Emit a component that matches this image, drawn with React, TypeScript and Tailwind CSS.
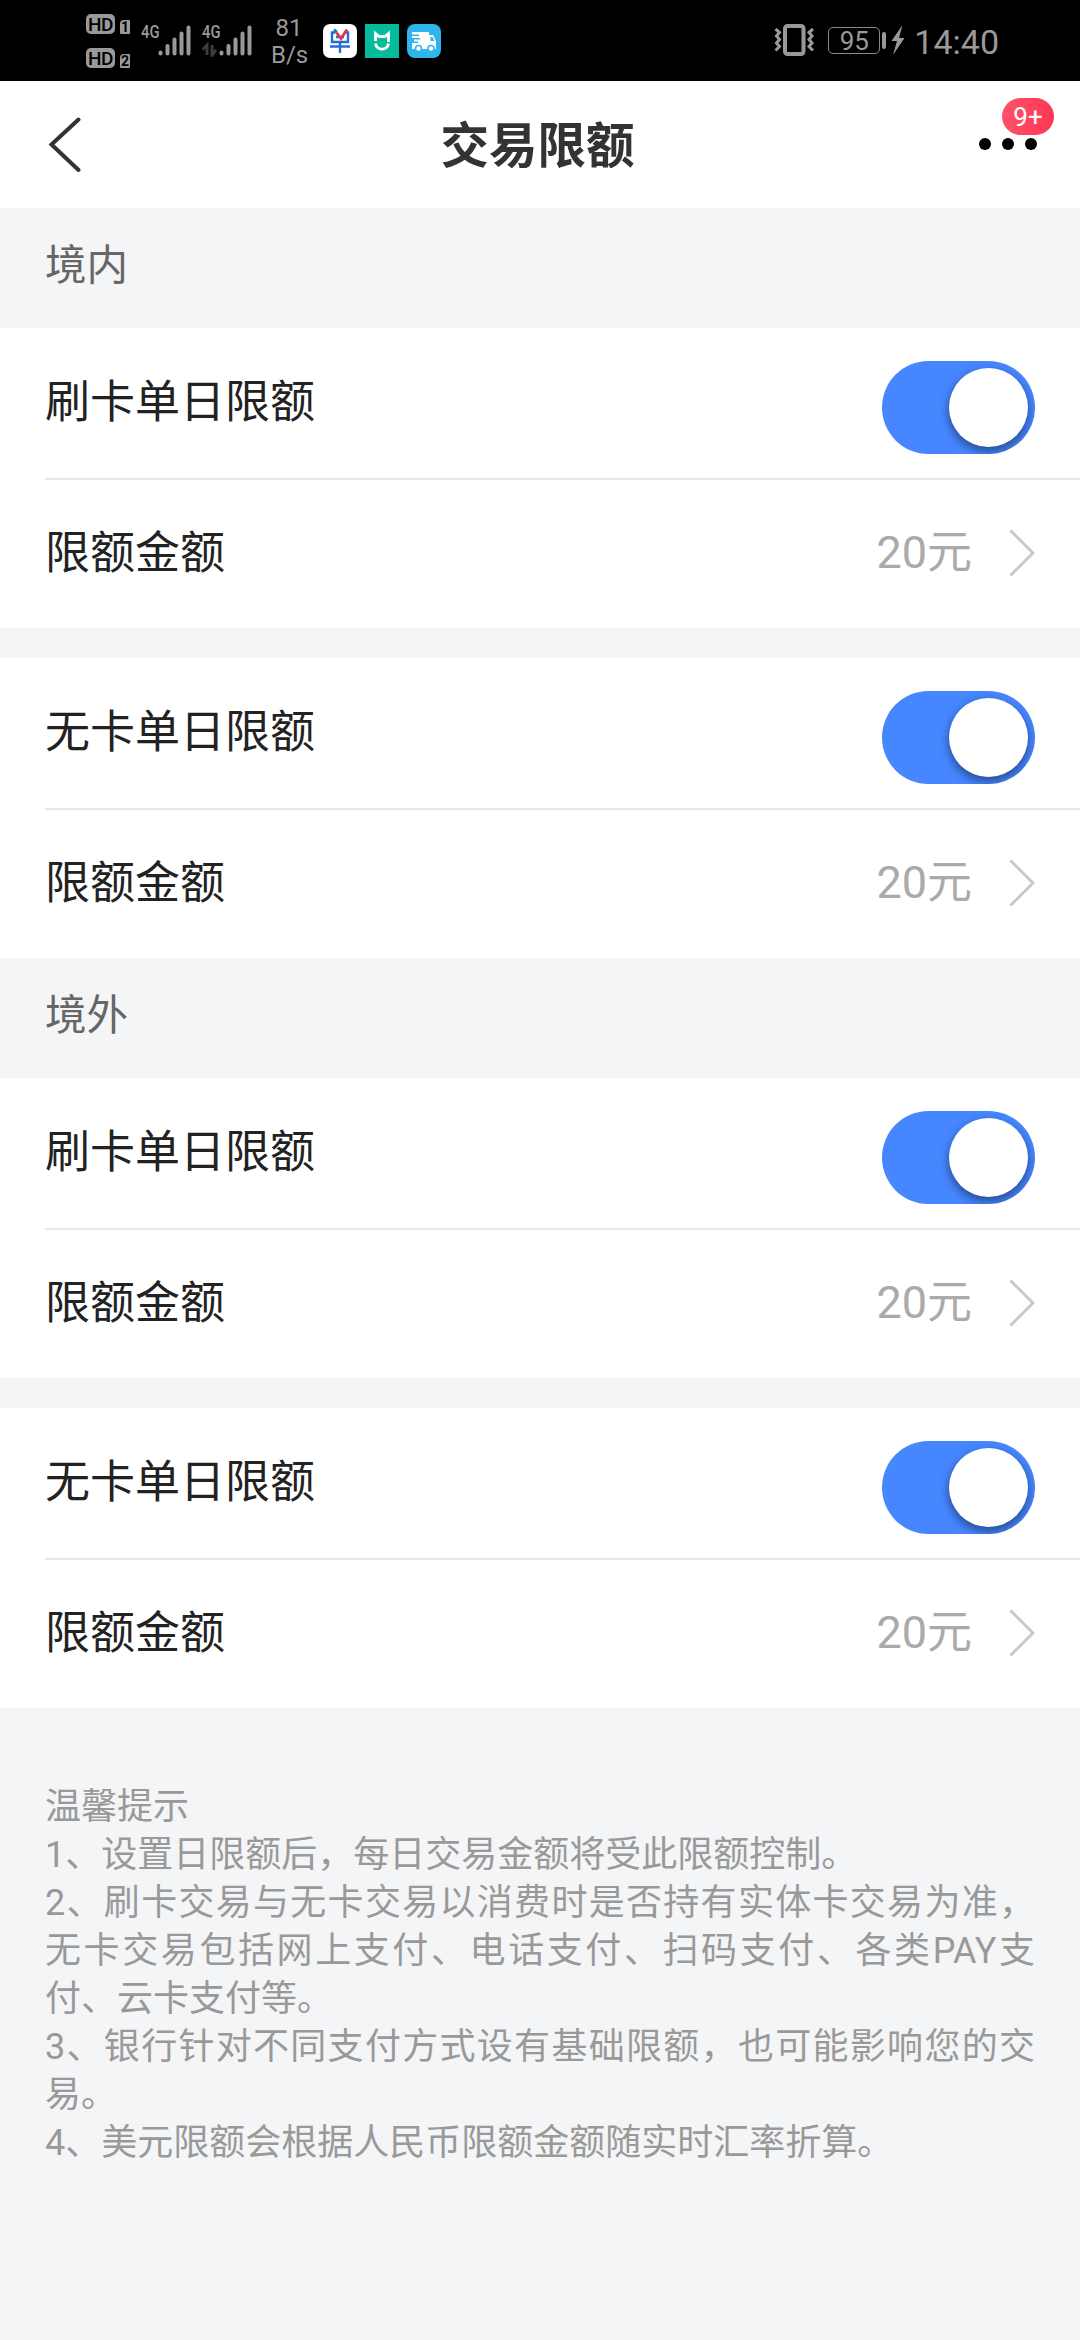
type Group = { label: string; amount: string };
type Section = { title: string; groups: Group[] };

const sections: Section[] = [
  {
    title: "境内",
    groups: [
      { label: "刷卡单日限额", amount: "20元" },
      { label: "无卡单日限额", amount: "20元" },
    ],
  },
  {
    title: "境外",
    groups: [
      { label: "刷卡单日限额", amount: "20元" },
      { label: "无卡单日限额", amount: "20元" },
    ],
  },
];

const tips = [
  "1、设置日限额后，每日交易金额将受此限额控制。",
  "2、刷卡交易与无卡交易以消费时是否持有实体卡交易为准，无卡交易包括网上支付、电话支付、扫码支付、各类PAY支付、云卡支付等。",
  "3、银行针对不同支付方式设有基础限额，也可能影响您的交易。",
  "4、美元限额会根据人民币限额金额随实时汇率折算。",
];

function HdBadge({ sim }: { sim: string }) {
  return (
    <div className="flex items-end gap-[5px]">
      <span className="flex h-[20px] w-[29px] items-center justify-center rounded-[5px] bg-[#999] text-[19px] font-medium leading-none tracking-[-0.5px] text-black">
        HD
      </span>
      <span className="flex h-[14px] w-[10px] items-center justify-center rounded-[1px] rounded-tl-[4px] bg-[#999] text-[14px] font-bold leading-none text-black">
        {sim}
      </span>
    </div>
  );
}

function Signal({ data }: { data?: boolean }) {
  return (
    <div className="relative h-[32px] w-[50px]">
      <span className="absolute left-0 top-0 origin-left scale-x-[0.78] text-[19px] font-medium leading-[14px] text-[#999]">
        4G
      </span>
      <svg className="absolute inset-0" width="50" height="32" viewBox="0 0 50 32">
        <path
          d="M19.5 27.5v1M26.5 21v7.5M33.5 14.500v14M40.500 8.500v20M47.500 2.500v26"
          stroke="#999"
          strokeWidth="4"
          strokeLinecap="round"
        />
        {data && (
          <path
            d="M5 30V20L0.500 24.500M10 20v10l4-5"
            fill="none"
            stroke="#3c3c3c"
            strokeWidth="3"
          />
        )}
      </svg>
    </div>
  );
}

function StatusBar() {
  return (
    <div className="flex h-[81px] bg-black font-['Roboto'] text-[#999]">
      <div className="ml-[86px] mt-[14px] flex w-[55px] flex-col gap-[14px]">
        <HdBadge sim="1" />
        <HdBadge sim="2" />
      </div>
      <div className="mt-[25px] flex gap-[11px]">
        <Signal />
        <Signal data />
      </div>
      <div className="ml-[19px] mt-[15px] w-[36px] text-center text-[24px] leading-[27px]">
        <div>81</div>
        <div>B/s</div>
      </div>
      <div className="ml-[16px] mt-[24px] flex gap-2">
        <svg width="34" height="34" viewBox="0 0 34 34">
          <rect width="34" height="34" rx="7" fill="#fff" />
          <path
            d="M14 8L11 5.500M12.500 8.500H9V18H25V8.500H22.500M13 13h8M7 22.500h20M17 18v11"
            fill="none"
            stroke="#1f6fd6"
            strokeWidth="2.400"
          />
          <path d="M13.500 8.500l4.500 6 6-9" fill="none" stroke="#e0364c" strokeWidth="2.800" />
        </svg>
        <svg width="34" height="34" viewBox="0 0 34 34">
          <rect width="34" height="34" fill="#06bb9c" />
          <path
            d="M10.500 17V9.500l3.500 3h6l3.500-3V18M10.500 19.500c1 7.500 12 7.500 13 0"
            fill="none"
            stroke="#fff"
            strokeWidth="2.800"
          />
        </svg>
        <svg width="34" height="34" viewBox="0 0 34 34">
          <rect width="34" height="34" rx="8" fill="#2fb5ee" />
          <path d="M5 8h17v3h4l3 6v8H5v-6h6v-1.500H7v-2h6V14H5v-2h7v-1.500H5z" fill="#fff" />
          <path d="M23.500 13h2l2 4h-4z" fill="#2fb5ee" />
          <circle cx="11.500" cy="24.500" r="3" fill="#fff" stroke="#2fb5ee" strokeWidth="1.500" />
          <circle cx="24" cy="24.500" r="3" fill="#fff" stroke="#2fb5ee" strokeWidth="1.500" />
        </svg>
      </div>
      <div className="ml-auto mr-[81px] mt-[24px] flex items-start">
        <svg width="41" height="32" viewBox="0 0 41 32" fill="none" stroke="#999">
          <rect x="11" y="2" width="18.500" height="28" rx="2.500" strokeWidth="4" />
          <path
            d="M1.500 5l4 3.500-3 3.500 3 3.500-3 3.500 3 3.500-4 4M39 5l-4 3.500 3 3.500-3 3.500 3 3.500-3 3.500 4 4"
            strokeWidth="3"
          />
        </svg>
        <div className="ml-[13px] mt-[3px] flex h-[27px] w-[52px] items-center justify-center rounded-[5px] border-[1.500px] border-[#888] text-[26px] leading-none">
          95
        </div>
        <div className="ml-[2px] mt-[5px] h-[17px] w-[4px] rounded-[2px] bg-[#999] translate-y-[3px]" />
        <svg className="ml-[5px]" width="14" height="32" viewBox="0 0 14 32" fill="#999">
          <path d="M11.500 1L0.500 17h5.500L2 31L13.500 14H8z" />
        </svg>
        <div className="ml-[9px] text-[34px] leading-[36px]">14:40</div>
      </div>
    </div>
  );
}

function Header() {
  return (
    <header className="flex h-[127px] items-start justify-between bg-white pl-[48px] pr-[43px]">
      <svg className="mt-[36px]" width="48" height="56" viewBox="0 0 48 56" fill="none">
        <path
          d="M30.500 2.500L3.500 27.500L30.500 53"
          stroke="#333"
          strokeWidth="4"
          strokeLinecap="round"
        />
      </svg>
      <h1 className="mt-[31px] text-[48.500px] font-bold leading-[70px] text-[#333]">交易限额</h1>
      <div className="relative mt-[57px] flex gap-[11px]">
        <span className="size-3 rounded-full bg-black" />
        <span className="size-3 rounded-full bg-black" />
        <span className="size-3 rounded-full bg-black" />
        <span className="absolute -top-[40px] left-[23px] flex h-[37px] w-[52px] items-center justify-center rounded-full bg-gradient-to-r from-[#ff5168] to-[#ff3554] text-[26px] leading-none text-white">
          9+
        </span>
      </div>
    </header>
  );
}

function Toggle() {
  return (
    <button
      role="switch"
      aria-checked="true"
      className="mt-[9px] flex h-[93px] w-[153px] items-center justify-end overflow-hidden rounded-full bg-[#4686ff] pr-[7px]"
    >
      <span className="size-[79px] rounded-full bg-white shadow-[0_4px_9px_1px_rgba(0,0,0,0.4)]" />
    </button>
  );
}

function LimitGroup({ group }: { group: Group }) {
  return (
    <div className="h-[300px] bg-white pl-[45px] text-[45px] leading-[60px] text-[#222]">
      <div className="flex h-[152px] items-center justify-between border-b-2 border-[#e8e8e8] pr-[45px]">
        <span>{group.label}</span>
        <Toggle />
      </div>
      <div className="flex h-[148px] items-center justify-between pr-[45px]">
        <span className="-mt-[1px]">限额金额</span>
        <div className="-mt-[2px] flex items-center">
          <span className="text-[#aaa]">{group.amount}</span>
          <svg className="ml-[37px]" width="26" height="48" viewBox="0 0 26 48" fill="none">
            <path d="M1.500 1.500L24 24L1.500 46.500" stroke="#c8c8c8" strokeWidth="3" />
          </svg>
        </div>
      </div>
    </div>
  );
}

export default function App() {
  return (
    <div className="h-[2340px] w-[1080px] overflow-hidden bg-[#f4f5f7] font-['Roboto','Noto_Sans_CJK_SC',sans-serif]">
      <StatusBar />
      <Header />
      {sections.map((section) => (
        <section key={section.title}>
          <h2 className="h-[120px] pl-[45px] text-[41.500px] leading-[115px] text-[#666]">
            {section.title}
          </h2>
          <div className="flex flex-col gap-[30px]">
            {section.groups.map((group) => (
              <LimitGroup key={group.label} group={group} />
            ))}
          </div>
        </section>
      ))}
      <div className="px-[45px] pt-[75px] text-justify text-[36px] leading-[48px] text-[#999]">
        <p>温馨提示</p>
        {tips.map((tip) => (
          <p key={tip}>{tip}</p>
        ))}
      </div>
    </div>
  );
}
